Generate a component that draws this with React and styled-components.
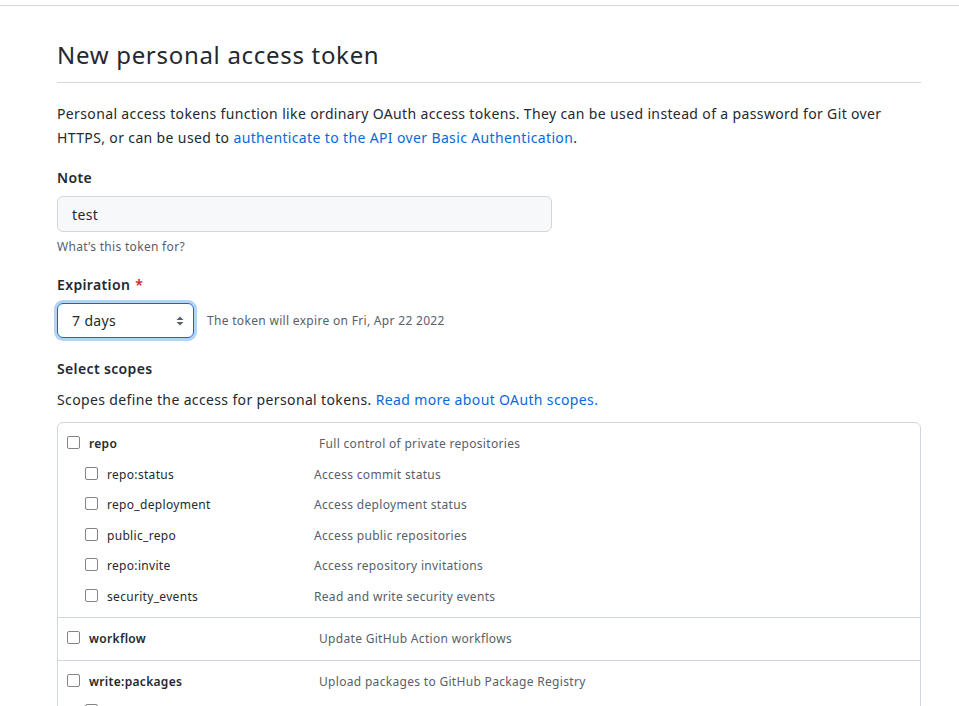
import React from "react";
import styled, { createGlobalStyle } from "styled-components";

const GlobalStyle = createGlobalStyle`
  html, body {
    margin: 0;
    padding: 0;
    background: #ffffff;
  }
  body {
    font-family: "Noto Sans", "Open Sans", sans-serif;
    font-size: 14px;
    color: #24292f;
  }
  * {
    letter-spacing: 0.026em;
  }
`;

const scopes = [
  {
    name: "repo",
    desc: "Full control of private repositories",
    children: [
      { name: "repo:status", desc: "Access commit status" },
      { name: "repo_deployment", desc: "Access deployment status" },
      { name: "public_repo", desc: "Access public repositories" },
      { name: "repo:invite", desc: "Access repository invitations" },
      { name: "security_events", desc: "Read and write security events" },
    ],
  },
  { name: "workflow", desc: "Update GitHub Action workflows", children: [] },
  {
    name: "write:packages",
    desc: "Upload packages to GitHub Package Registry",
    children: [{ name: "read:packages", desc: "Download packages from GitHub Package Registry" }],
  },
];

export default function App() {
  return (
    <>
      <GlobalStyle />
      <TopBar />
      <Page>
        <Subhead>New personal access token</Subhead>
        <Intro>
          Personal access tokens function like ordinary OAuth access tokens. They can be used
          instead of a password for Git over HTTPS, or can be used to{" "}
          <Link href="#">authenticate to the API over Basic Authentication</Link>.
        </Intro>

        <FormGroup>
          <Label>Note</Label>
          <TextInput defaultValue="test" />
          <Note>What’s this token for?</Note>
        </FormGroup>

        <FormGroup>
          <Label>
            Expiration <Required>*</Required>
          </Label>
          <SelectRow>
            <SelectBox>
              <span>7 days</span>
              <svg width="8" height="12" viewBox="0 0 8 12">
                <path d="M4 1.5 L7.5 5 H0.5 Z" fill="#57606a" />
                <path d="M4 10.5 L7.5 7 H0.5 Z" fill="#57606a" />
              </svg>
            </SelectBox>
            <ExpireText>The token will expire on Fri, Apr 22 2022</ExpireText>
          </SelectRow>
        </FormGroup>

        <ScopesLabel>Select scopes</ScopesLabel>
        <ScopesText>
          Scopes define the access for personal tokens.{" "}
          <Link href="#">Read more about OAuth scopes.</Link>
        </ScopesText>

        <ScopeBox>
          {scopes.map((s) => (
            <ScopeGroup key={s.name} $nested={s.children.length > 0}>
              <ScopeRow $parent>
                <Check />
                <ScopeName $parent>{s.name}</ScopeName>
                <ScopeDesc>{s.desc}</ScopeDesc>
              </ScopeRow>
              {s.children.map((c) => (
                <ScopeRow key={c.name}>
                  <Check />
                  <ScopeName>{c.name}</ScopeName>
                  <ScopeDesc>{c.desc}</ScopeDesc>
                </ScopeRow>
              ))}
            </ScopeGroup>
          ))}
        </ScopeBox>
      </Page>
    </>
  );
}

const TopBar = styled.div`
  height: 5px;
  border-bottom: 1px solid #d0d7de;
`;

const Page = styled.div`
  width: 864px;
  margin-left: 57px;
  padding-top: 31px;
`;

const Subhead = styled.h2`
  margin: 0 0 19px;
  padding-bottom: 9px;
  border-bottom: 1px solid #d0d7de;
  font-size: 24px;
  font-weight: 400;
  line-height: 36px;
  letter-spacing: 0.029em;
  color: #24292f;
`;

const Intro = styled.p`
  margin: 0 0 17px;
  line-height: 24px;
`;

const Link = styled.a`
  color: #0969da;
  text-decoration: none;
`;

const FormGroup = styled.div`
  margin-bottom: 18px;
`;

const Label = styled.div`
  font-weight: 600;
  line-height: 21px;
  margin-bottom: 8px;
`;

const ScopesLabel = styled(Label)`
  padding-top: 2px;
  margin-bottom: 0;
`;

const Required = styled.span`
  color: #cf222e;
  margin-left: 1px;
`;

const TextInput = styled.input`
  display: block;
  box-sizing: border-box;
  width: 495px;
  height: 36px;
  padding: 0 14px;
  font-family: inherit;
  font-size: 14px;
  color: #24292f;
  background: #f6f8fa;
  border: 1px solid #d0d7de;
  border-radius: 6px;
  outline: none;
`;

const Note = styled.p`
  margin: 6px 0 0;
  font-size: 12px;
  line-height: 18px;
  color: #57606a;
`;

const SelectRow = styled.div`
  display: flex;
  align-items: center;
  gap: 13px;
`;

const SelectBox = styled.div`
  box-sizing: border-box;
  width: 137px;
  height: 35px;
  display: flex;
  align-items: center;
  justify-content: space-between;
  padding: 0 9px 0 14px;
  border: 1px solid #0969da;
  border-radius: 6px;
  box-shadow: 0 0 0 3px rgba(9, 105, 218, 0.3);
  font-size: 14px;
`;

const ExpireText = styled.span`
  font-size: 12px;
  color: #57606a;
`;

const ScopesText = styled.p`
  margin: 10px 0 12px;
  line-height: 21px;
`;

const ScopeBox = styled.div`
  border: 1px solid #d0d7de;
  border-radius: 6px;
`;

const ScopeGroup = styled.div`
  padding: 9px 0 ${(p) => (p.$nested ? "5px" : "10px")};
  & + & {
    border-top: 1px solid #d0d7de;
  }
`;

const ScopeRow = styled.label`
  display: flex;
  align-items: center;
  height: ${(p) => (p.$parent ? "23px" : "30.5px")};
  margin-bottom: ${(p) => (p.$parent ? "4px" : "0")};
  padding-left: ${(p) => (p.$parent ? "9px" : "27px")};
  &:last-child {
    margin-bottom: 0;
  }
`;

const Check = styled.span`
  box-sizing: border-box;
  width: 13px;
  height: 13px;
  border: 1px solid #858585;
  border-radius: 2px;
  flex-shrink: 0;
  margin-top: -2px;
`;

const ScopeName = styled.span`
  width: ${(p) => (p.$parent ? "230px" : "207px")};
  margin-left: 9px;
  font-size: 12px;
  font-weight: ${(p) => (p.$parent ? 600 : 400)};
`;

const ScopeDesc = styled.span`
  font-size: 12px;
  color: #57606a;
`;
